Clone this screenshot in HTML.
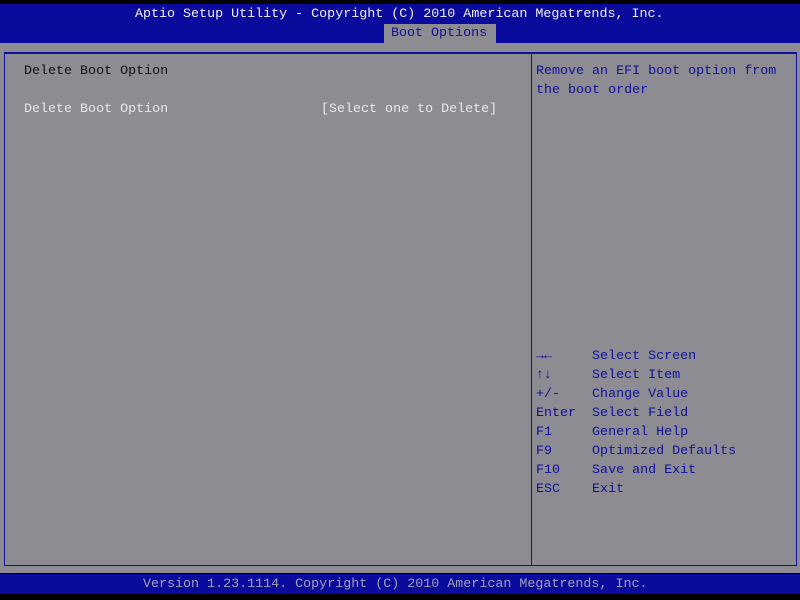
<!DOCTYPE html>
<html><head><style>
body{margin:0;width:800px;height:600px;background:#000;position:relative;overflow:hidden;font-family:"Liberation Mono",monospace;font-size:13.35px;}
.t{position:absolute;white-space:pre;line-height:19px;}
#hdr{position:absolute;left:0;top:4px;width:800px;height:39px;background:#0a0a9c;}
#gray{position:absolute;left:0;top:43px;width:800px;height:530px;background:#8d8c93;}
#box{position:absolute;left:4px;top:52px;width:791px;height:511px;border:1px solid #1010a0;border-top:2px solid #1010a0;}
#div{position:absolute;left:531px;top:52px;width:1px;height:513px;background:#1010a0;}
#ftr{position:absolute;left:0;top:574px;width:800px;height:20px;background:#0a0a9c;}
.w{color:#f0f0f0}.b{color:#10109a}.k{color:#101010}.l{color:#e8e8ee}
</style></head><body>
<div id="hdr"></div>
<div id="gray"></div>
<div style="position:absolute;left:384px;top:24px;width:112px;height:19px;background:#8d8c93"></div>
<div class="t w" style="left:135px;top:5px">Aptio Setup Utility - Copyright (C) 2010 American Megatrends, Inc.</div>
<div class="t b" style="left:391px;top:24px">Boot Options</div>
<div id="box"></div><div id="div"></div>
<div class="t k" style="left:24px;top:62px">Delete Boot Option</div>
<div class="t l" style="left:24px;top:100px">Delete Boot Option</div>
<div class="t l" style="left:321px;top:100px">[Select one to Delete]</div>
<div class="t b" style="left:536px;top:62px">Remove an EFI boot option from
the boot order</div>
<div class="t b" style="left:536px;top:347px">→←     Select Screen
↑↓     Select Item
+/-    Change Value
Enter  Select Field
F1     General Help
F9     Optimized Defaults
F10    Save and Exit
ESC    Exit</div>
<div id="ftr"></div>
<div class="t" style="left:143px;top:575px;color:#a0a0b8">Version 1.23.1114. Copyright (C) 2010 American Megatrends, Inc.</div>
</body></html>
